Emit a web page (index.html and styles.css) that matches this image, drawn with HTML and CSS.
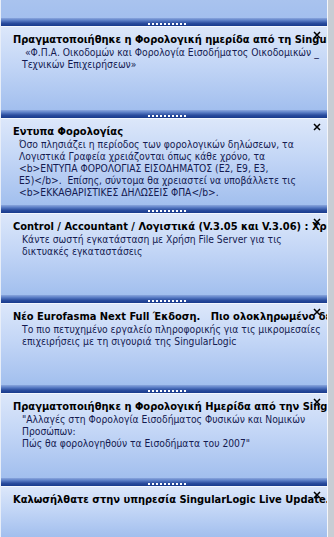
FILE: index.html
```html
<!DOCTYPE html>
<html lang="el">
<head>
<meta charset="utf-8">
<title>SingularLogic Live Update</title>
<link rel="stylesheet" href="styles.css">
</head>
<body>
<div class="frame">
  <div class="list">
    <div class="tail"></div>

    <div class="panel p1">
      <div class="grip"><span class="dots"></span></div>
      <div class="body">
        <div class="title">Πραγματοποιήθηκε η Φορολογική ημερίδα από τη SingularLogic</div>
        <svg class="close" width="8" height="8" viewBox="0 0 8 8"><path d="M1 1L7 7M7 1L1 7"/></svg>
        <div class="text">&nbsp;«Φ.Π.Α. Οικοδομών και Φορολογία Εισοδήματος Οικοδομικών _<br>Τεχνικών Επιχειρήσεων»</div>
      </div>
    </div>

    <div class="panel p2">
      <div class="grip"><span class="dots"></span></div>
      <div class="body">
        <div class="title">Εντυπα Φορολογίας</div>
        <svg class="close" width="8" height="8" viewBox="0 0 8 8"><path d="M1 1L7 7M7 1L1 7"/></svg>
        <div class="text wide">Όσο πλησιάζει η περίοδος των φορολογικών δηλώσεων, τα<br>Λογιστικά Γραφεία χρειάζονται όπως κάθε χρόνο, τα<br>&lt;b&gt;ΕΝΤΥΠΑ ΦΟΡΟΛΟΓΙΑΣ ΕΙΣΟΔΗΜΑΤΟΣ (Ε2, Ε9, Ε3,<br>Ε5)&lt;/b&gt;.&nbsp; Επίσης, σύντομα θα χρειαστεί να υποβάλλετε τις<br>&lt;b&gt;ΕΚΚΑΘΑΡΙΣΤΙΚΕΣ ΔΗΛΩΣΕΙΣ ΦΠΑ&lt;/b&gt;.</div>
      </div>
    </div>

    <div class="panel p3">
      <div class="grip"><span class="dots"></span></div>
      <div class="body">
        <div class="title">Control / Accountant / Λογιστικά (V.3.05 και V.3.06) : Χρήση File Server</div>
        <svg class="close" width="8" height="8" viewBox="0 0 8 8"><path d="M1 1L7 7M7 1L1 7"/></svg>
        <div class="text">Κάντε σωστή εγκατάσταση με Χρήση File Server για τις<br>δικτυακές εγκαταστάσεις</div>
      </div>
    </div>

    <div class="panel p4">
      <div class="grip"><span class="dots"></span></div>
      <div class="body">
        <div class="title">Νέο Eurofasma Next Full Έκδοση.&nbsp;&nbsp; Πιο ολοκληρωμένο δεν γίνεται</div>
        <svg class="close" width="8" height="8" viewBox="0 0 8 8"><path d="M1 1L7 7M7 1L1 7"/></svg>
        <div class="text">Το πιο πετυχημένο εργαλείο πληροφορικής για τις μικρομεσαίες<br>επιχειρήσεις με τη σιγουριά της SingularLogic</div>
      </div>
    </div>

    <div class="panel p5">
      <div class="grip"><span class="dots"></span></div>
      <div class="body">
        <div class="title">Πραγματοποιήθηκε η Φορολογική Ημερίδα από την SingularLogic</div>
        <svg class="close" width="8" height="8" viewBox="0 0 8 8"><path d="M1 1L7 7M7 1L1 7"/></svg>
        <div class="text">"Αλλαγές στη Φορολογία Εισοδήματος Φυσικών και Νομικών<br>Προσώπων:<br>Πώς θα φορολογηθούν τα Εισοδήματα του 2007"</div>
      </div>
    </div>

    <div class="panel p6">
      <div class="grip"><span class="dots"></span></div>
      <div class="body">
        <div class="title">Καλωσήλθατε στην υπηρεσία SingularLogic Live Update.</div>
        <svg class="close" width="8" height="8" viewBox="0 0 8 8"><path d="M1 1L7 7M7 1L1 7"/></svg>
      </div>
    </div>
  </div>
  <div class="edge"></div>
</div>
</body>
</html>
```

FILE: styles.css
```css
html, body {
  margin: 0;
  padding: 0;
  height: 100%;
  overflow: hidden;
}

body {
  background: #c9cfd6;
  font-family: "DejaVu Sans Condensed", "DejaVu Sans", sans-serif;
  font-stretch: condensed;
}

.frame {
  display: flex;
  height: 537px;
}

.list {
  width: 326px;
  border-left: 1px solid #e8eef8;
  display: flex;
  flex-direction: column;
  overflow: hidden;
  background: linear-gradient(#e3ecfb, #a7c3ef);
}

.edge {
  flex: 1;
  border-left: 1px solid #f4f6fa;
  background: #c8cdd4;
}

.tail {
  height: 18px;
  flex: none;
  background: linear-gradient(#a9c3ee, #a3bfee);
}

.panel {
  flex: none;
  display: flex;
  flex-direction: column;
}

.p1 { height: 92px; }
.p2 { height: 95px; }
.p3 { height: 90px; }
.p4 { height: 90px; }
.p5 { height: 93px; }
.p6 { flex: 1; }

.grip {
  height: 9px;
  flex: none;
  display: flex;
  justify-content: center;
  align-items: flex-end;
  box-sizing: border-box;
  background: linear-gradient(#8aa6dd 0%, #5b7ec6 30%, #2a4c9e 65%, #183a8c 100%);
  border-bottom: 1px solid #f2f6fd;
}

.dots {
  width: 38px;
  height: 2px;
  margin-left: 6px;
  margin-bottom: 1px;
  background: repeating-linear-gradient(90deg, #ffffff 0 2px, transparent 2px 4px);
}

.body {
  flex: 1;
  position: relative;
  padding: 6px 0 0 12px;
  background: linear-gradient(#dce7fa 0%, #c3d6f6 45%, #a2bfee 100%);
  overflow: hidden;
}

.title {
  font-weight: bold;
  font-size: 11px;
  line-height: 13px;
  color: #000;
  white-space: pre;
}

.close {
  position: absolute;
  top: 4px;
  right: 6px;
  stroke: #000;
  stroke-width: 1.5;
  fill: none;
}

.text {
  font-size: 10.25px;
  line-height: 12px;
  color: #141a50;
  padding-left: 9px;
  white-space: nowrap;
}

.text.wide {
  padding-left: 6px;
}
```
